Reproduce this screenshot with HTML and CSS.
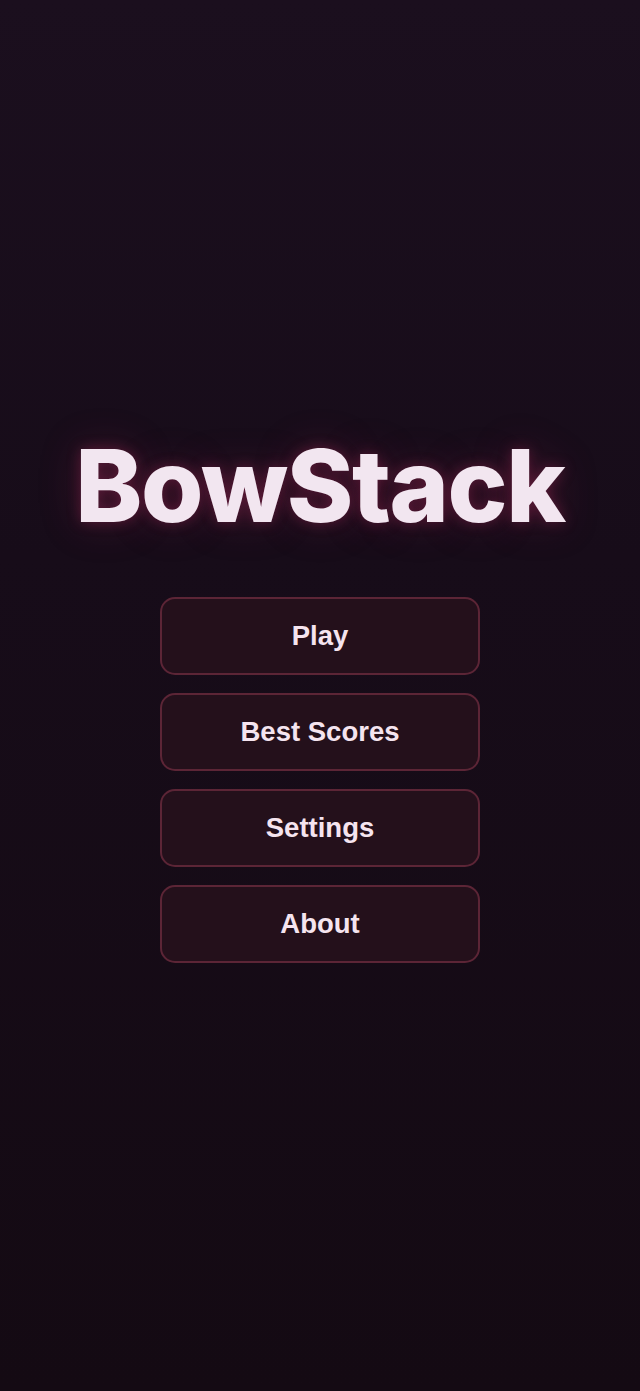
FILE: index.html
```html
<!DOCTYPE html>
<html lang="en">
<head>
<meta charset="utf-8">
<title>BowStack</title>
<link rel="stylesheet" href="styles.css">
</head>
<body>
<main class="menu">
  <h1 class="title">BowStack</h1>
  <nav class="buttons">
    <button class="btn">Play</button>
    <button class="btn">Best Scores</button>
    <button class="btn">Settings</button>
    <button class="btn">About</button>
  </nav>
</main>
</body>
</html>
```
FILE: styles.css
```css
html, body {
  margin: 0;
  padding: 0;
}
body {
  box-sizing: border-box;
  min-height: 1391px;
  padding-bottom: 4px;
  background: linear-gradient(180deg, #1b0f1e 0%, #170c19 40%, #140a13 100%);
  font-family: "Liberation Sans", Arial, sans-serif;
  display: flex;
  align-items: center;
  justify-content: center;
}
.menu {
  display: flex;
  flex-direction: column;
  align-items: center;
}
.title {
  margin: 0 0 52px;
  font-family: Inter, "Liberation Sans", sans-serif;
  font-weight: 800;
  font-size: 101px;
  line-height: 120px;
  letter-spacing: -1.4px;
  color: #f2e6f0;
  text-shadow: 0 0 14px rgba(190, 50, 100, 0.35), 0 0 40px rgba(150, 35, 80, 0.3);
}
.buttons {
  display: flex;
  flex-direction: column;
  gap: 18px;
}
.btn {
  width: 320px;
  height: 78px;
  border: 2px solid #5c2536;
  border-radius: 15px;
  background: #24101b;
  color: #f5e4ef;
  font-family: "Liberation Sans", Arial, sans-serif;
  font-weight: 700;
  font-size: 27.5px;
  cursor: pointer;
}
```
